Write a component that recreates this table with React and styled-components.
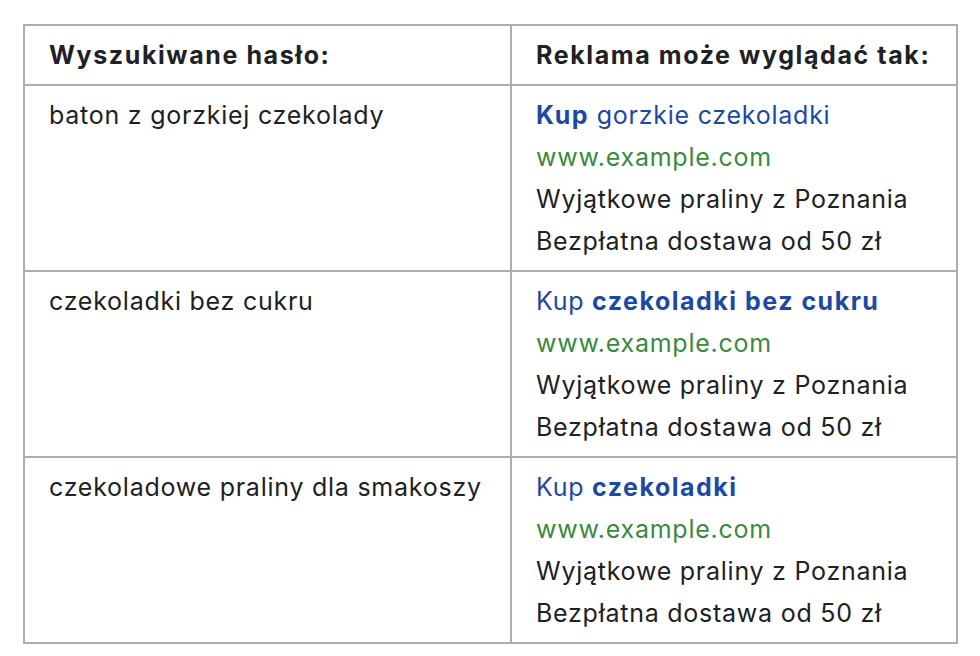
import React from "react";
import styled, { createGlobalStyle } from "styled-components";

const Global = createGlobalStyle`
  body {
    margin: 0;
    background: #fff;
    font-family: Inter, Roboto, "Noto Sans", sans-serif;
    color: #202124;
  }
`;

const Page = styled.div`
  padding: 24px 22px 0 23px;
`;

const Table = styled.table`
  width: 935px;
  border-collapse: collapse;
  font-size: 25px;
  line-height: 42px;
  letter-spacing: 0.75px;
  td,
  th {
    border: 2px solid #aeaeae;
    padding: 8px 24px;
    text-align: left;
    vertical-align: top;
  }
  th {
    font-weight: 700;
    letter-spacing: 1.6px;
  }
`;

const LeftCol = styled.col`
  width: 487px;
`;

const Line = styled.div`
  color: ${(p) => p.color || "#202124"};
  white-space: nowrap;
`;

const B = styled.b`
  font-weight: 700;
  letter-spacing: 1.5px;
`;

const rows = [
  { q: "baton z gorzkiej czekolady", title: [["Kup", true], [" gorzkie czekoladki", false]] },
  { q: "czekoladki bez cukru", title: [["Kup ", false], ["czekoladki bez cukru", true]] },
  { q: "czekoladowe praliny dla smakoszy", title: [["Kup ", false], ["czekoladki", true]] },
];

function Ad({ title }) {
  return (
    <>
      <Line color="#1d48a3">
        {title.map(([t, bold], i) => (bold ? <B key={i}>{t}</B> : <span key={i}>{t}</span>))}
      </Line>
      <Line color="#3a8a40">www.example.com</Line>
      <Line>Wyjątkowe praliny z Poznania</Line>
      <Line>Bezpłatna dostawa od 50 zł</Line>
    </>
  );
}

export default function App() {
  return (
    <Page>
      <Global />
      <Table>
        <colgroup>
          <LeftCol />
          <col />
        </colgroup>
        <thead>
          <tr>
            <th>Wyszukiwane hasło:</th>
            <th>Reklama może wyglądać tak:</th>
          </tr>
        </thead>
        <tbody>
          {rows.map((r) => (
            <tr key={r.q}>
              <td>{r.q}</td>
              <td>
                <Ad title={r.title} />
              </td>
            </tr>
          ))}
        </tbody>
      </Table>
    </Page>
  );
}
